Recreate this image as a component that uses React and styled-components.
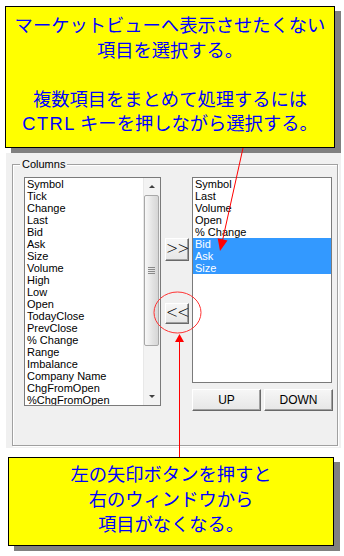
import styled, { createGlobalStyle } from "styled-components"

const GlobalStyle = createGlobalStyle`
  html, body {
    margin: 0;
    padding: 0;
    background: #ffffff;
  }
`

const Page = styled.div`
  position: relative;
  width: 344px;
  height: 556px;
  padding-top: 6px;
  box-sizing: border-box;
  overflow: hidden;
`

const Callout = styled.div`
  box-sizing: border-box;
  width: ${(p) => p.$width}px;
  height: ${(p) => p.$height}px;
  margin-left: ${(p) => p.$left}px;
  margin-top: ${(p) => p.$top || 0}px;
  padding-top: ${(p) => p.$padTop}px;
  background: #ffff00;
  border: 1px solid #000000;
  box-shadow: 6px 5px 0 #808080;
  color: #0000ff;
  font-family: "Noto Sans CJK JP", sans-serif;
  font-size: 18.3px;
  line-height: ${(p) => p.$lineHeight}px;
  text-align: center;
  white-space: nowrap;
`

const Line = styled.div`
  height: ${(p) => p.$lineHeight}px;
`

const Wide = styled.span`
  letter-spacing: 1.5px;
  font-family: "Liberation Sans", sans-serif;
`

const Panel = styled.div`
  box-sizing: border-box;
  width: 335px;
  height: 295px;
  margin: 5px 0 0 6px;
  padding: 11px 3px 0 6px;
  background: #f0f0f0;
`

const GroupBox = styled.div`
  box-sizing: border-box;
  width: 326px;
  height: 282px;
  border: 1px solid #a0a0a0;
  box-shadow: 1px 1px 0 #ffffff, inset 1px 1px 0 #ffffff;
  padding: 0 4px 0 11px;
  font-family: "Liberation Sans", sans-serif;
  font-size: 11px;
  color: #000000;
`

const Legend = styled.div`
  width: fit-content;
  margin: -7px 0 0 -4px;
  padding: 0 2px;
  background: #f0f0f0;
  line-height: 12px;
`

const Row = styled.div`
  display: flex;
  margin-top: 7px;
`

const ListBox = styled.div`
  box-sizing: border-box;
  display: flex;
  width: ${(p) => p.$width}px;
  height: ${(p) => p.$height}px;
  border: 1px solid #7a7a7a;
  background: #ffffff;
`

const Items = styled.div`
  flex: 1;
  overflow: hidden;
`

const Item = styled.div`
  height: 12px;
  line-height: 12px;
  padding-left: 2px;
  white-space: nowrap;
  background: ${(p) => (p.$selected ? "#3399ff" : "transparent")};
  color: ${(p) => (p.$selected ? "#ffffff" : "#000000")};
`

const ScrollBar = styled.div`
  display: flex;
  flex-direction: column;
  width: 16px;
  background: #f3f3f3;
  border-left: 1px solid #e8e8e8;
`

const ScrollArrow = styled.div`
  display: flex;
  align-items: center;
  justify-content: center;
  height: 17px;

  &::after {
    content: "";
    border-left: 3px solid transparent;
    border-right: 3px solid transparent;
    ${(p) =>
      p.$down
        ? "border-top: 3px solid #404040;"
        : "border-bottom: 3px solid #404040;"}
  }
`

const Thumb = styled.div`
  display: flex;
  flex-direction: column;
  align-items: center;
  justify-content: center;
  gap: 1px;
  height: 149px;
  margin: 0 1px 0 0;
  border: 1px solid #a8a8a8;
  border-radius: 2px;
  background: linear-gradient(to right, #f8f8f8, #e2e2e2 60%, #d6d6d6);
`

const Grip = styled.div`
  width: 7px;
  height: 1px;
  background: #8a8a8a;
`

const Spacer = styled.div`
  flex: 1;
`

const Middle = styled.div`
  display: flex;
  flex-direction: column;
  width: 31px;
  padding: 61px 0 0 4px;
  box-sizing: border-box;
  gap: 42px;
`

const WinButton = styled.button`
  box-sizing: border-box;
  display: flex;
  align-items: center;
  justify-content: center;
  width: ${(p) => p.$width}px;
  height: ${(p) => p.$height}px;
  padding: 0;
  margin: 0;
  background: linear-gradient(#f6f6f6, #e6e6e6);
  border: 1px solid;
  border-color: #ffffff #696969 #696969 #ffffff;
  box-shadow: inset -1px -1px 0 #a0a0a0;
  font-family: "Liberation Sans", sans-serif;
  font-weight: 400;
  font-size: ${(p) => p.$size}px;
  color: #000000;
  line-height: 1;
`

const Chevrons = styled.span`
  font-family: "DejaVu Sans", sans-serif;
  font-weight: 200;
  letter-spacing: -1px;
  margin-top: -2px;
  transform: scaleX(0.85);
`

const RightColumn = styled.div`
  display: flex;
  flex-direction: column;
  gap: 6px;
`

const ButtonRow = styled.div`
  display: flex;
  gap: 3px;
`

const Overlay = styled.svg`
  position: absolute;
  left: 0;
  top: 0;
  pointer-events: none;
`

const leftItems = [
  "Symbol", "Tick", "Change", "Last", "Bid", "Ask", "Size", "Volume", "High",
  "Low", "Open", "TodayClose", "PrevClose", "% Change", "Range", "Imbalance",
  "Company Name", "ChgFromOpen", "%ChgFromOpen",
]

const rightItems = [
  { name: "Symbol" }, { name: "Last" }, { name: "Volume" }, { name: "Open" },
  { name: "% Change" }, { name: "Bid", selected: true },
  { name: "Ask", selected: true }, { name: "Size", selected: true },
]

const App = () => {
  return (
    <Page>
      <GlobalStyle />
      <Callout $width={330} $height={142} $left={5} $padTop={5} $lineHeight={24.5}>
        <Line $lineHeight={24.5}>マーケットビューへ表示させたくない</Line>
        <Line $lineHeight={24.5}>項目を選択する。</Line>
        <Line $lineHeight={24.5} />
        <Line $lineHeight={24.5}>複数項目をまとめて処理するには</Line>
        <Line $lineHeight={24.5}><Wide>CTRL</Wide> キーを押しながら選択する。</Line>
      </Callout>

      <Panel>
        <GroupBox>
          <Legend>Columns</Legend>
          <Row>
            <ListBox $width={139} $height={229}>
              <Items>
                {leftItems.map((name) => (
                  <Item key={name}>{name}</Item>
                ))}
              </Items>
              <ScrollBar>
                <ScrollArrow />
                <Thumb>
                  <Grip />
                  <Grip />
                  <Grip />
                  <Grip />
                </Thumb>
                <Spacer />
                <ScrollArrow $down />
              </ScrollBar>
            </ListBox>

            <Middle>
              <WinButton $width={24} $height={23} $size={17}>
                <Chevrons>&gt;&gt;</Chevrons>
              </WinButton>
              <WinButton $width={24} $height={21} $size={17}>
                <Chevrons>&lt;&lt;</Chevrons>
              </WinButton>
            </Middle>

            <RightColumn>
              <ListBox $width={140} $height={206}>
                <Items>
                  {rightItems.map((it) => (
                    <Item key={it.name} $selected={it.selected}>{it.name}</Item>
                  ))}
                </Items>
              </ListBox>
              <ButtonRow>
                <WinButton $width={69} $height={22} $size={12}>UP</WinButton>
                <WinButton $width={69} $height={22} $size={12}>DOWN</WinButton>
              </ButtonRow>
            </RightColumn>
          </Row>
        </GroupBox>
      </Panel>

      <Callout $width={326} $height={89} $left={8} $top={9} $padTop={3} $lineHeight={25}>
        <Line $lineHeight={25}>左の矢印ボタンを押すと</Line>
        <Line $lineHeight={25}>右のウィンドウから</Line>
        <Line $lineHeight={25}>項目がなくなる。</Line>
      </Callout>

      <Overlay width="344" height="556" viewBox="0 0 344 556">
        <line x1="243" y1="148" x2="222.6" y2="240" stroke="#ff0000" strokeWidth="1" />
        <polygon points="220,251 227.5,240.4 217.7,238.2" fill="#ff0000" />
        <ellipse cx="177.5" cy="312.5" rx="23.5" ry="20.5" fill="none" stroke="#ff3333" strokeWidth="1" />
        <line x1="179.5" y1="457" x2="179.5" y2="341" stroke="#ff0000" strokeWidth="1" />
        <polygon points="179.5,334 175,342 184,342" fill="#ff0000" />
      </Overlay>
    </Page>
  )
}

export default App
